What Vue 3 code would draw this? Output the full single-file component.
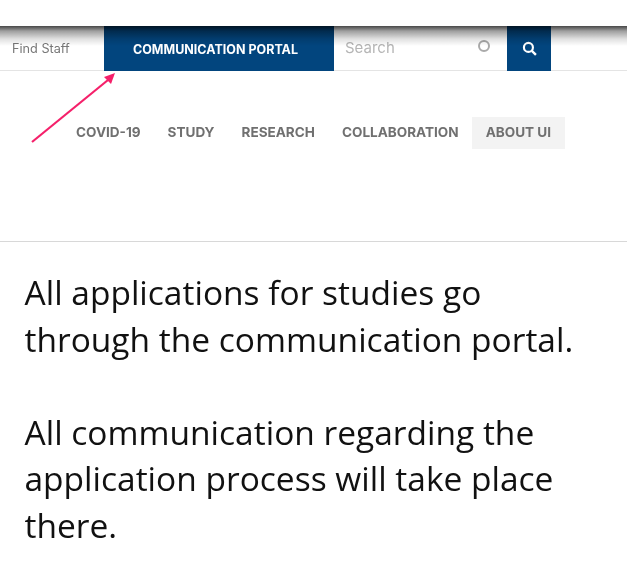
<script setup>
const links = ['COVID-19', 'STUDY', 'RESEARCH', 'COLLABORATION', 'ABOUT UI']
</script>

<template>
  <div class="page">
    <header class="top">
      <div class="staff">Find Staff</div>
      <div class="portal">COMMUNICATION PORTAL</div>
      <div class="search">
        <span class="placeholder">Search</span>
        <span class="ring"></span>
      </div>
      <div class="go">
        <svg width="15" height="15" viewBox="0 0 14 14" fill="none" stroke="#fff">
          <circle cx="6" cy="6" r="4.2" stroke-width="2" />
          <path d="M9.2 9.2 13 13" stroke-width="2.2" />
        </svg>
      </div>
      <div class="shade"></div>
    </header>
    <div class="navzone">
      <svg class="arrow" width="130" height="80" viewBox="0 0 130 80">
        <path d="M32 71 L108 9" stroke="#f5206a" stroke-width="2.2" fill="none" />
        <path d="M115 2 L104 6 L111 13 Z" fill="#f5206a" />
      </svg>
      <nav class="nav">
        <a v-for="l in links" :key="l" :class="['link', { active: l === 'ABOUT UI' }]">{{ l }}</a>
      </nav>
    </div>
    <main class="text">
      <p>All applications for studies go through the communication portal.</p>
      <p>All communication regarding the application process will take place there.</p>
    </main>
  </div>
</template>

<style>
html, body { margin: 0; background: #fff; }
</style>

<style scoped>
.page { width: 627px; height: 582px; overflow: hidden; font-family: Inter, "Liberation Sans", sans-serif; background: #fff; filter: blur(0.5px); }
.top { position: relative; margin-top: 26px; height: 45px; box-sizing: border-box; border-bottom: 1px solid #e4e4e4; display: flex; align-items: stretch; }
.staff { width: 104px; box-sizing: border-box; padding: 15px 0 0 12px; font-size: 12.7px; color: #777; }
.portal { width: 230px; box-sizing: border-box; background: #02457e; color: #fff; font-size: 12.5px; font-weight: 700; text-align: center; padding: 16px 7px 0 0; margin-bottom: -1px; }
.search { width: 173px; box-sizing: border-box; padding: 12px 0 0 11px; position: relative; font-size: 15px; color: #b5b5b5; }
.ring { position: absolute; left: 144px; top: 14px; width: 8px; height: 8px; border: 2px solid #aaa; border-radius: 50%; }
.go { width: 44px; background: #02457e; display: flex; align-items: center; justify-content: center; margin-bottom: -1px; }
.shade { position: absolute; left: 0; right: 0; top: 0; height: 20px; background: linear-gradient(rgba(0,0,0,.72), rgba(0,0,0,.38) 25%, rgba(0,0,0,.12) 65%, rgba(0,0,0,0)); pointer-events: none; }
.navzone { position: relative; height: 170px; border-bottom: 1px solid #d8d8d8; }
.arrow { position: absolute; left: 0; top: 0; }
.nav { display: flex; padding: 46px 0 0 62.5px; }
.link { font-size: 13.55px; font-weight: 700; color: #707070; padding: 8px 13.5px 10px; height: 14px; line-height: 14px; }
.active { background: #f3f3f3; }
.text { padding: 27px 24.5px 0; font-family: "Open Sans", sans-serif; font-size: 33.5px; line-height: 46.5px; color: #111; }
.text p { margin: 0 0 46.5px; }
</style>
